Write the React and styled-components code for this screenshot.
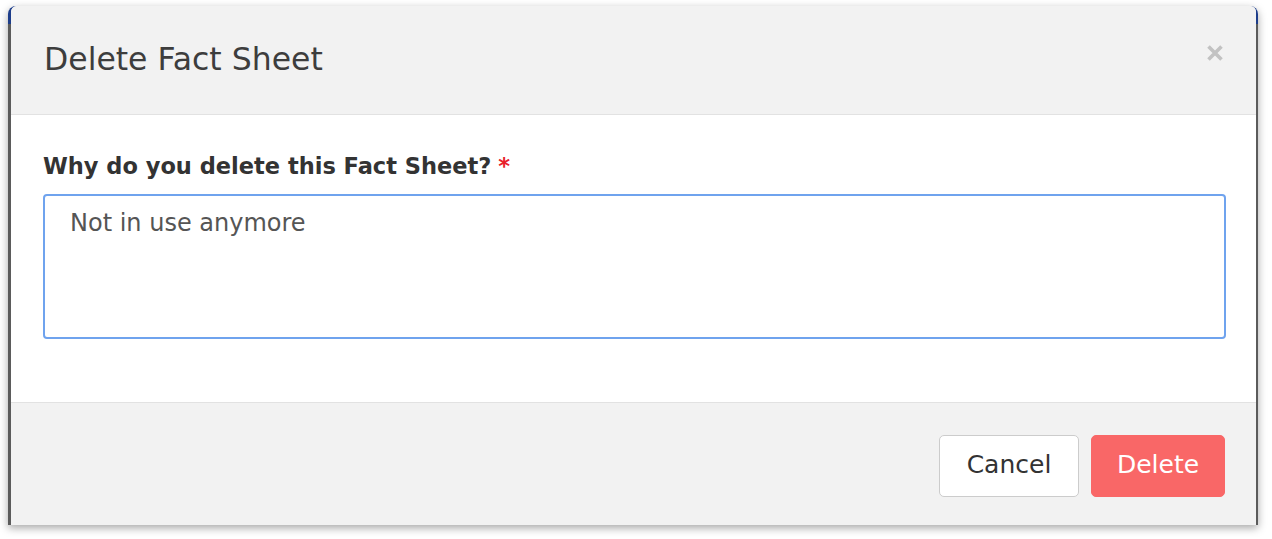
import React, { useState } from "react";
import styled, { createGlobalStyle } from "styled-components";

const GlobalStyle = createGlobalStyle`
  body {
    margin: 0;
    background: #ffffff;
    font-family: "DejaVu Sans", "Open Sans", sans-serif;
  }
`;

const Page = styled.div`
  padding: 6px 14px 12px 8px;
`;

const Frame = styled.div`
  display: flex;
  height: 519px;
  padding: 0 2px 0 3px;
  border-radius: 8px 8px 0 0;
  background: linear-gradient(#1d3d8a 0 18px, #5b5b5b 18px);
  box-shadow: 0 3px 8px rgba(0, 0, 0, 0.35);
`;

const Modal = styled.div`
  flex: 1;
  display: flex;
  flex-direction: column;
  background: #ffffff;
  border-radius: 6px 6px 0 0;
  overflow: hidden;
`;

const Header = styled.div`
  display: flex;
  align-items: center;
  justify-content: space-between;
  height: 108px;
  padding: 0 32px 0 33px;
  background: #f2f2f2;
  border-bottom: 1px solid #e2e2e2;
`;

const Title = styled.h2`
  margin: 0 0 2px;
  font-size: 31.5px;
  font-weight: 400;
  color: #3d3d3d;
`;

const Close = styled.button`
  display: flex;
  border: 0;
  background: none;
  padding: 0;
  color: #c2c2c2;
  cursor: pointer;
  margin-top: -14px;
`;

const Body = styled.div`
  flex: 1;
  padding: 38px 30px 0 32px;
`;

const Label = styled.label`
  display: block;
  margin-bottom: 15px;
  font-size: 22.5px;
  font-weight: 700;
  color: #333333;
`;

const Required = styled.span`
  color: #e8202a;
  margin-left: 7px;
`;

const TextArea = styled.textarea`
  display: block;
  box-sizing: border-box;
  width: 100%;
  height: 145px;
  padding: 13px 25px;
  border: 2px solid #6fa3ee;
  border-radius: 4px;
  resize: none;
  outline: none;
  font-family: inherit;
  font-size: 24px;
  color: #555555;
  caret-color: #333333;
`;

const Footer = styled.div`
  display: flex;
  justify-content: flex-end;
  gap: 12px;
  height: 123px;
  box-sizing: border-box;
  padding: 32px 31px 0 0;
  background: #f2f2f2;
  border-top: 1px solid #e2e2e2;
`;

const Button = styled.button`
  height: 62px;
  padding: 0 0 3px;
  width: ${(p) => (p.$danger ? 134 : 140)}px;
  border-radius: 5px;
  border: 1px solid ${(p) => (p.$danger ? "#f96767" : "#cccccc")};
  background: ${(p) => (p.$danger ? "#f96767" : "#ffffff")};
  color: ${(p) => (p.$danger ? "#ffffff" : "#333333")};
  font-family: inherit;
  font-size: 25px;
  cursor: pointer;
`;

export default function App() {
  const [reason, setReason] = useState("Not in use anymore");

  return (
    <>
      <GlobalStyle />
      <Page>
        <Frame>
          <Modal>
            <Header>
              <Title>Delete Fact Sheet</Title>
              <Close aria-label="Close">
                <svg width="18" height="18" viewBox="0 0 18 18">
                  <path
                    d="M2.5 2.5 L15.5 15.5 M15.5 2.5 L2.5 15.5"
                    stroke="currentColor"
                    strokeWidth="3.6"
                    strokeLinecap="butt"
                  />
                </svg>
              </Close>
            </Header>
            <Body>
              <Label htmlFor="reason">
                Why do you delete this Fact Sheet?<Required>*</Required>
              </Label>
              <TextArea
                id="reason"
                value={reason}
                onChange={(e) => setReason(e.target.value)}
                autoFocus
              />
            </Body>
            <Footer>
              <Button>Cancel</Button>
              <Button $danger>Delete</Button>
            </Footer>
          </Modal>
        </Frame>
      </Page>
    </>
  );
}
